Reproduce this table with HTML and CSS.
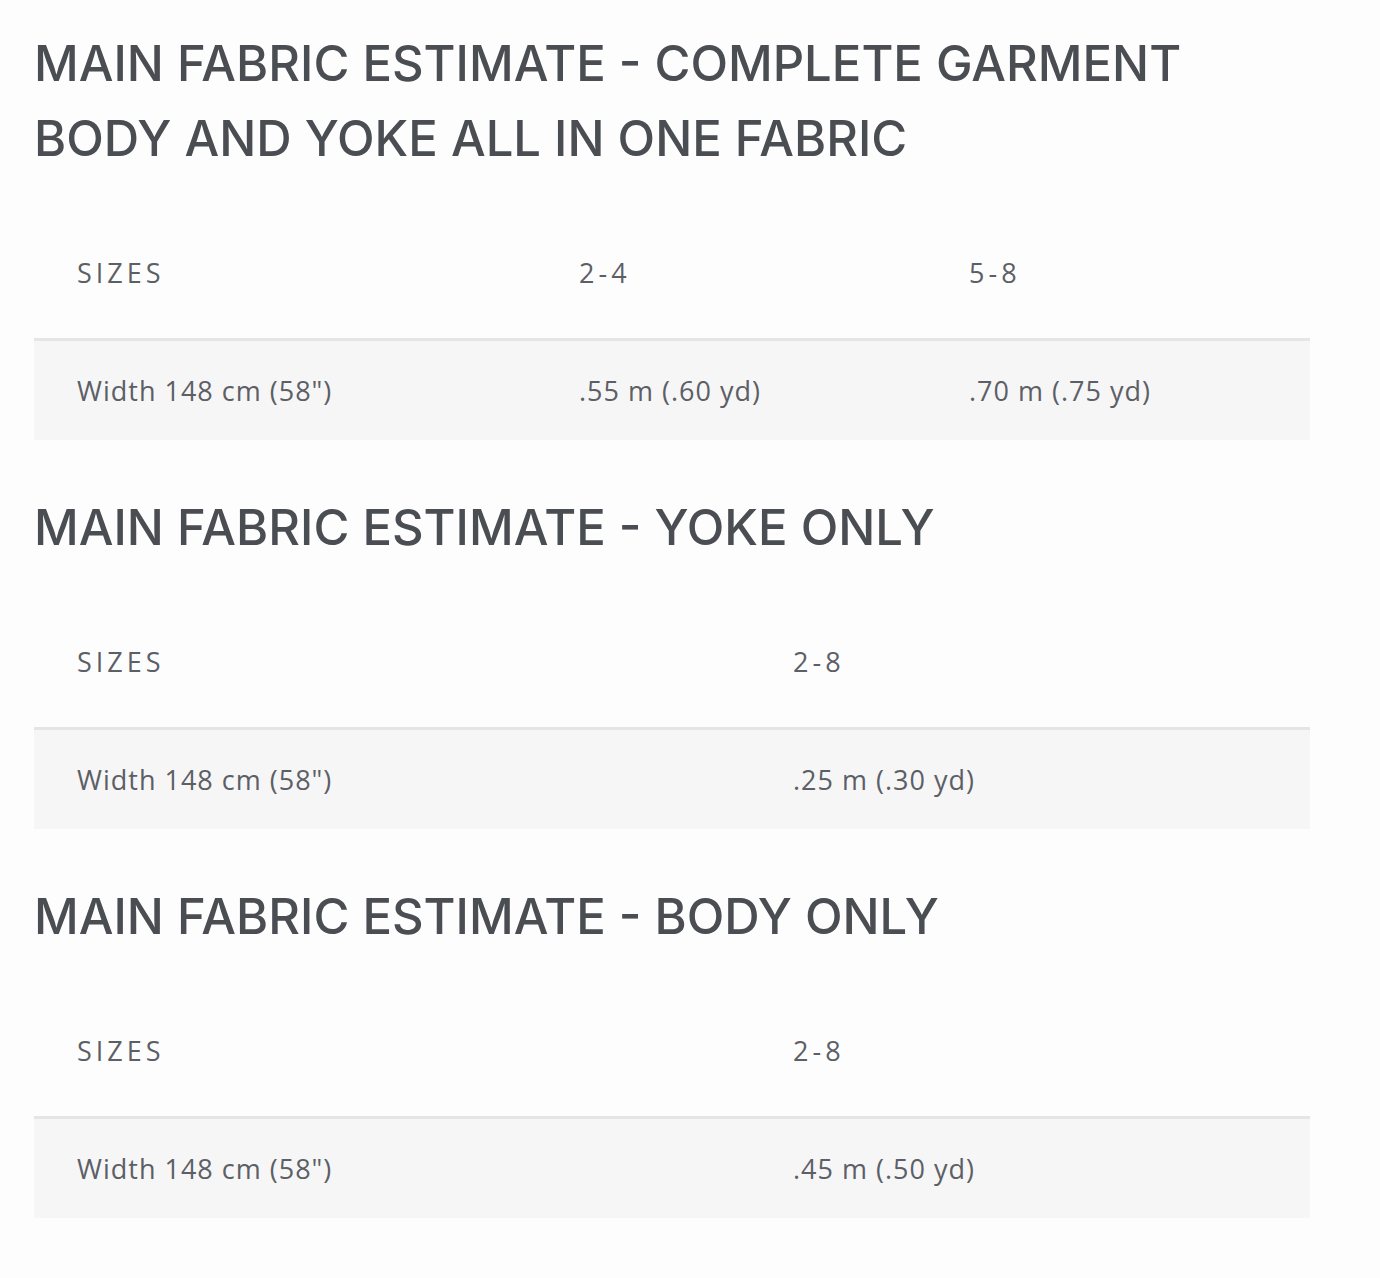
FILE: index.html
```html
<!DOCTYPE html>
<html lang="en">
<head>
<meta charset="utf-8">
<title>Main fabric estimate</title>
<link rel="stylesheet" href="styles.css">
</head>
<body>
<main class="page">
  <section class="block">
    <h2 class="title">MAIN FABRIC ESTIMATE - COMPLETE GARMENT BODY AND YOKE ALL IN ONE FABRIC</h2>
    <table class="sizes three">
      <colgroup><col class="c1"><col class="c2"><col class="c3"></colgroup>
      <thead><tr><th>Sizes</th><th>2-4</th><th>5-8</th></tr></thead>
      <tbody><tr><td>Width 148 cm (58")</td><td>.55 m (.60 yd)</td><td>.70 m (.75 yd)</td></tr></tbody>
    </table>
  </section>
  <section class="block">
    <h2 class="title">MAIN FABRIC ESTIMATE - YOKE ONLY</h2>
    <table class="sizes two">
      <colgroup><col class="c1"><col class="c2"></colgroup>
      <thead><tr><th>Sizes</th><th>2-8</th></tr></thead>
      <tbody><tr><td>Width 148 cm (58")</td><td>.25 m (.30 yd)</td></tr></tbody>
    </table>
  </section>
  <section class="block">
    <h2 class="title">MAIN FABRIC ESTIMATE - BODY ONLY</h2>
    <table class="sizes two">
      <colgroup><col class="c1"><col class="c2"></colgroup>
      <thead><tr><th>Sizes</th><th>2-8</th></tr></thead>
      <tbody><tr><td>Width 148 cm (58")</td><td>.45 m (.50 yd)</td></tr></tbody>
    </table>
  </section>
</main>
</body>
</html>
```
FILE: styles.css
```css
html, body {
  margin: 0;
  padding: 0;
  background: #fdfdfd;
}
.page {
  width: 1276px;
  padding: 26px 0 0 34px;
}
.block {
  margin-bottom: 50px;
}
.title {
  margin: 0 0 30px 0;
  font-family: "Inter", "Liberation Sans", sans-serif;
  font-weight: 500;
  font-size: 49px;
  line-height: 75px;
  color: #4a4d52;
  letter-spacing: 0;
}
.sizes {
  width: 100%;
  border-collapse: collapse;
  table-layout: fixed;
  font-family: "Open Sans", "Liberation Sans", sans-serif;
  font-size: 27px;
  color: #5c5f66;
}
.three .c1 { width: 502px; }
.three .c2 { width: 390px; }
.three .c3 { width: 384px; }
.two .c1 { width: 716px; }
.two .c2 { width: 560px; }
.sizes th {
  text-align: left;
  font-weight: 400;
  text-transform: uppercase;
  letter-spacing: 4px;
  height: 132px;
  padding: 0 0 0 43px;
  vertical-align: middle;
}
.sizes td {
  background: #f6f6f6;
  border-top: 3px solid #e5e5e5;
  height: 99px;
  padding: 0 0 0 43px;
  vertical-align: middle;
  letter-spacing: 1px;
}
```
